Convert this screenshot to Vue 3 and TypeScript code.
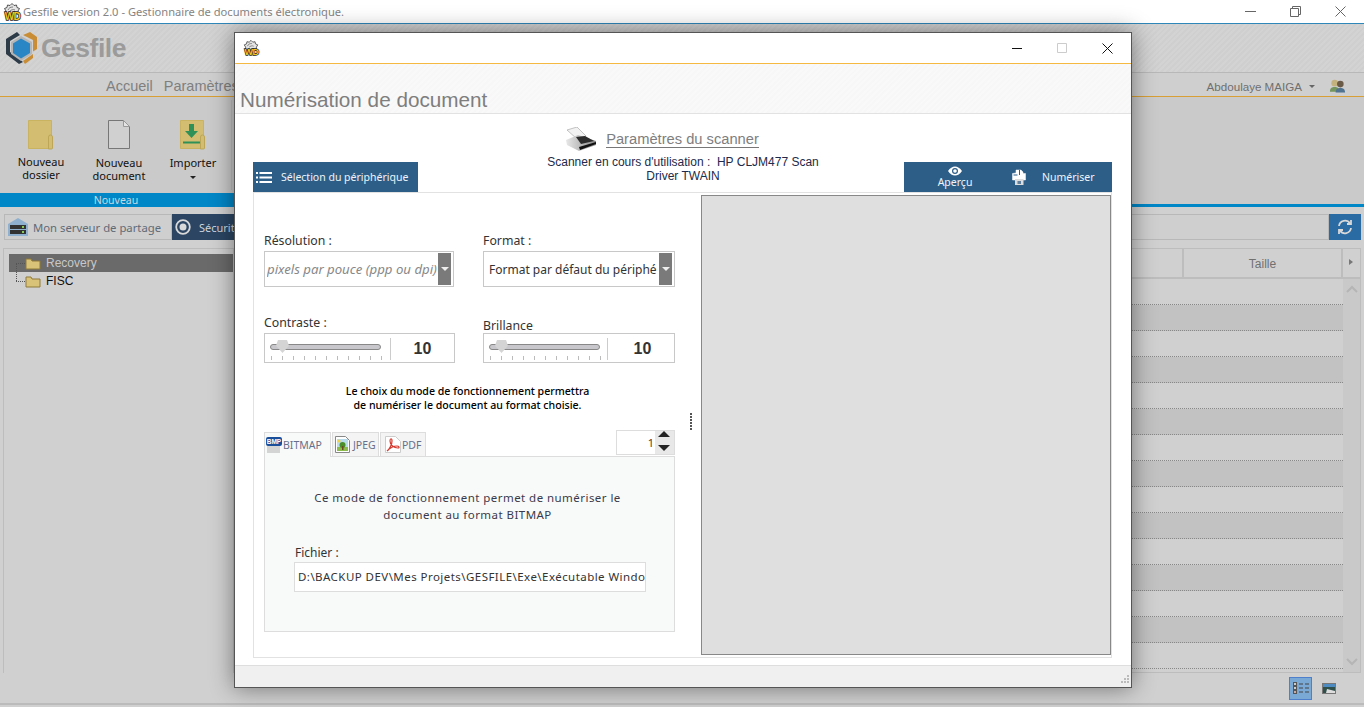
<script setup lang="ts">
const rows = Array.from({ length: 15 }, (_, i) => i)
const ticks = Array.from({ length: 11 }, (_, i) => i)
</script>

<template>
  <div class="app">
    <header class="titlebar">
      <svg class="wd" width="20" height="20" viewBox="0 0 20 20">
        <path d="M4 9 L2.500 6.500 L5 5.500 L5.500 3 L8 3.500 L10 1.500 L12 3.500 L14.500 3 L15 5.500 L17.500 6.500 L16 9 L16 12 H4 Z" fill="#e4e4e4" stroke="#444" stroke-width=".9" />
        <path d="M6 8c1-2 2-3 5-3M8 9c1-1 3-2 5-1" fill="none" stroke="#666" stroke-width=".8" />
        <text x="10.500" y="17.800" class="wdt" text-anchor="middle">WD</text>
      </svg>
      <span class="apptitle">Gesfile version 2.0 - Gestionnaire de documents électronique.</span>
      <div class="winbtns">
        <svg width="11" height="11" viewBox="0 0 11 11"><path d="M0 5.500h11" stroke="#666" /></svg>
        <svg width="11" height="11" viewBox="0 0 11 11"><path d="M.5 2.500h8v8h-8zM2.500 2.500v-2h8v8h-2" stroke="#666" fill="none" /></svg>
        <svg width="11" height="11" viewBox="0 0 11 11"><path d="M.5.500l10 10M10.500.500l-10 10" stroke="#666" /></svg>
      </div>
    </header>

    <div class="logoband">
      <svg width="32" height="33" viewBox="0 0 32 33">
        <path d="M11 0 L0 7 V22 L13 32 L17 30 L6 21.500 L4 20 V9 L14 3 Z" fill="#2d3a48" />
        <path d="M15 4 L26 10 V22 L15 29 L5 22 V10 Z" fill="#b5b5b5" />
        <path d="M15 6.500 L24 11.500 V21 L15 26.500 L7 21 V11.500 Z" fill="#2a86c4" />
        <path d="M17 3 L24 0 L31 5 V17 L27 19.500 V8 Z" fill="#c98d35" />
        <path d="M17 29 L27 22 V26 L19 32 Z" fill="#c98d35" />
      </svg>
      <span class="logotext">Gesfile</span>
    </div>

    <nav class="menubar">
      <span class="menu-item first">Accueil</span>
      <span class="menu-item">Paramètres</span>
      <span class="spacer"></span>
      <span class="user">Abdoulaye MAIGA</span>
      <span class="caret"></span>
      <svg width="17" height="16" viewBox="0 0 18 16">
        <circle cx="6" cy="5" r="3.500" fill="#c4b27e" />
        <path d="M1 14c0-4 2-5 5-5s5 1 5 5z" fill="#74955c" />
        <circle cx="12" cy="6" r="3.500" fill="#6a5a48" />
        <path d="M7 15c0-4 2-5 5-5s5 1 5 5z" fill="#4f7391" />
      </svg>
    </nav>

    <section class="ribbon">
      <div class="rb rb1">
        <svg width="26" height="30" viewBox="0 0 26 30">
          <path d="M.5.500h23v28H.5z" fill="#d2bd70" stroke="#c9b260" />
          <path d="M20.500 29v-12q0-2 2-2t2 2v11q0 1-1 1z" fill="#d2bd70" stroke="#bda756" />
        </svg>
        <span>Nouveau<br />dossier</span>
      </div>
      <div class="rb rb2">
        <svg width="22" height="29" viewBox="0 0 22 29">
          <path d="M.5.500h15l6 6v22H.5z" fill="#d0d0d0" stroke="#777" />
          <path d="M15.500.500v6h6z" fill="#e4e4e4" stroke="#999" />
        </svg>
        <span>Nouveau<br />document</span>
      </div>
      <div class="rb rb3">
        <svg width="26" height="30" viewBox="0 0 26 30">
          <path d="M.5.500h23v28H.5z" fill="#d2bd70" stroke="#c9b260" />
          <path d="M20.500 29v-12q0-2 2-2t2 2v11q0 1-1 1z" fill="#d2bd70" stroke="#bda756" />
          <path d="M9 4h5v7h4l-6.500 7L5 11h4z" fill="#2f9158" />
          <path d="M3 22.500h17" stroke="#2f9158" stroke-width="2" />
        </svg>
        <span>Importer</span>
        <i class="mini-caret"></i>
      </div>
      <div class="rb-sep"></div>
    </section>
    <div class="band"><span>Nouveau</span><i></i></div>

    <div class="tabsrow">
      <div class="srv">
        <svg width="20" height="18" viewBox="0 0 20 18">
          <path d="M0 6L10 0l10 6v12H0z" fill="#8fb1cf" />
          <rect x="2" y="7" width="16" height="4" fill="#333" />
          <rect x="2" y="12" width="16" height="4" fill="#333" />
          <rect x="14" y="8" width="2" height="2" fill="#8c5" />
          <rect x="14" y="13" width="2" height="2" fill="#8c5" />
        </svg>
        <span>Mon serveur de partage</span>
      </div>
      <div class="secu">
        <svg width="16" height="16" viewBox="0 0 16 16">
          <circle cx="8" cy="8" r="6.800" fill="none" stroke="#d9d9d9" stroke-width="1.800" />
          <circle cx="8" cy="8" r="3.500" fill="#d9d9d9" />
        </svg>
        <span>Sécurité</span>
      </div>
      <div class="searchbox"></div>
      <div class="refresh">
        <svg width="16" height="16" viewBox="0 0 16 16" fill="none" stroke="#d8d8d8" stroke-width="1.800">
          <path d="M2 7a6 6 0 0 1 11-2.500M14 9a6 6 0 0 1-11 2.500" />
          <path d="M14 1v4h-4M2 15v-4h4" />
        </svg>
      </div>
    </div>

    <div class="main">
      <aside class="tree">
        <div class="node selected">
          <svg class="fold" width="16" height="13" viewBox="0 0 16 13"><path d="M1 2h5l1 2h8v8H1z" fill="#d9c378" stroke="#8f7b3b" /></svg>
          <span>Recovery</span>
        </div>
        <div class="node second">
          <svg class="fold" width="16" height="13" viewBox="0 0 16 13"><path d="M1 2h5l1 2h8v8H1z" fill="#d9c378" stroke="#8f7b3b" /></svg>
          <span>FISC</span>
        </div>
      </aside>
      <section class="table">
        <div class="thead">
          <div class="th-blank"></div>
          <div class="th">Taille</div>
          <div class="th-arrow"></div>
        </div>
        <div class="tbody">
          <div class="rowsbox">
            <div v-for="r in rows" :key="r" class="trow" :class="{ alt: r % 2 === 1 }"></div>
          </div>
          <div class="scroll">
            <svg width="12" height="8" viewBox="0 0 12 8"><path d="M1 7l5-5 5 5" fill="none" stroke="#b5b5b5" stroke-width="2" /></svg>
            <svg width="12" height="8" viewBox="0 0 12 8"><path d="M1 1l5 5 5-5" fill="none" stroke="#b5b5b5" stroke-width="2" /></svg>
          </div>
        </div>
      </section>
    </div>

    <footer class="statusbar">
      <div class="view">
        <svg width="16" height="13" viewBox="0 0 16 13">
          <rect x=".5" y=".5" width="3" height="3" fill="#ccc" stroke="#555" />
          <rect x=".5" y="4.500" width="3" height="3" fill="#ccc" stroke="#555" />
          <rect x=".5" y="8.500" width="3" height="3" fill="#c9a9a0" stroke="#555" />
          <path d="M6 2h4M12 2h4M6 6h4M12 6h4M6 10h4M12 10h4" stroke="#444" />
        </svg>
      </div>
      <div class="pic">
        <svg width="12" height="9" viewBox="0 0 12 9">
          <rect width="12" height="4" fill="#4d8bc0" />
          <path d="M0 3h12v6H0z" fill="#2f4f4a" />
          <path d="M4 5l8 2v2H3z" fill="#ddd" />
        </svg>
      </div>
    </footer>

    <div class="dialog">
      <div class="dlg-title">
        <svg class="wd" width="18" height="18" viewBox="0 0 20 20">
          <path d="M4 9 L2.500 6.500 L5 5.500 L5.500 3 L8 3.500 L10 1.500 L12 3.500 L14.500 3 L15 5.500 L17.500 6.500 L16 9 L16 12 H4 Z" fill="#e4e4e4" stroke="#444" stroke-width=".9" />
          <path d="M6 8c1-2 2-3 5-3M8 9c1-1 3-2 5-1" fill="none" stroke="#666" stroke-width=".8" />
          <text x="10.500" y="17.800" class="wdt" text-anchor="middle">WD</text>
        </svg>
        <div class="dlg-btns">
          <svg width="11" height="11" viewBox="0 0 11 11"><path d="M0 5.500h10" stroke="#111" /></svg>
          <svg width="11" height="11" viewBox="0 0 11 11"><path d="M.5.500h9v9h-9z" stroke="#ccc" fill="none" /></svg>
          <svg width="11" height="11" viewBox="0 0 11 11"><path d="M.5.500l10 10M10.500.500l-10 10" stroke="#111" /></svg>
        </div>
      </div>
      <div class="dlg-head"><h1>Numérisation de document</h1></div>

      <div class="dlg-body">
        <div class="scan-title">
          <svg width="32" height="24" viewBox="0 0 32 24">
            <defs>
              <linearGradient id="pg" x1="0" y1="0" x2="1" y2="0">
                <stop offset="0" stop-color="#e8e8e8" />
                <stop offset="1" stop-color="#8a8a8a" />
              </linearGradient>
            </defs>
            <path d="M2 3L12 0l9 9-9 3z" fill="#f2f2f2" stroke="#aaa" stroke-width=".7" />
            <path d="M1 13l12-5 18 6v4L14 24 2 18z" fill="url(#pg)" />
            <path d="M11 10l9-1 9 5-13 3z" fill="#2c2c2c" />
            <path d="M14 20l17-5v2L15 23z" fill="#111" />
          </svg>
          <span>Paramètres du scanner</span>
        </div>

        <div class="tool">
          <div class="tbtn sel">
            <svg width="16" height="11" viewBox="0 0 16 11" fill="#fff">
              <rect y="0" width="2" height="2" /><rect y="4.500" width="2" height="2" /><rect y="9" width="2" height="2" />
              <rect x="3.500" y="0" width="12.500" height="2" /><rect x="3.500" y="4.500" width="12.500" height="2" /><rect x="3.500" y="9" width="12.500" height="2" />
            </svg>
            <span>Sélection du périphérique</span>
          </div>
          <div class="cur">Scanner en cours d'utilisation :&nbsp; HP CLJM477 Scan<br />Driver TWAIN</div>
          <div class="tbtn act">
            <div class="apercu">
              <svg width="14" height="10" viewBox="0 0 14 10">
                <path d="M0 5c2-3 4.500-4.500 7-4.500S12 2 14 5c-2 3-4.500 4.500-7 4.500S2 8 0 5z" fill="#fff" />
                <circle cx="7" cy="5" r="3" fill="#2d5e88" />
                <circle cx="7" cy="5" r="1.800" fill="#fff" />
              </svg>
              <span>Aperçu</span>
            </div>
            <svg class="scanico" width="14" height="16" viewBox="0 0 14 16">
              <path d="M.5 11V4.500L4 4V1h5l2 2v1.500h2.500V11z" fill="#fff" stroke="#fff" stroke-width=".5" />
              <path d="M7.500 1v5M1.500 6h4" stroke="#2d5e88" stroke-width="1" />
              <rect x="3" y="10" width="8.500" height="6" fill="#dcdcdc" />
              <rect x="5.500" y="12" width="3.500" height="3" fill="#5f7f9c" />
            </svg>
            <span class="num">Numériser</span>
          </div>
        </div>

        <div class="panel">
          <div class="form">
            <div class="grid">
              <div class="fld">
                <label>Résolution :</label>
                <div class="select s1">
                  <span class="ph">pixels par pouce (ppp ou dpi)</span>
                  <i class="drop"></i>
                </div>
              </div>
              <div class="fld">
                <label>Format :</label>
                <div class="select">
                  <span class="val">Format par défaut du périphé</span>
                  <i class="drop"></i>
                </div>
              </div>
              <div class="fld f2">
                <label>Contraste :</label>
                <div class="slider wide">
                  <div class="track-wrap">
                    <div class="track"></div>
                    <div class="thumb"></div>
                    <div class="ticks"><i v-for="t in ticks" :key="t"></i></div>
                  </div>
                  <b>10</b>
                </div>
              </div>
              <div class="fld f2 f3">
                <label>Brillance</label>
                <div class="slider">
                  <div class="track-wrap">
                    <div class="track"></div>
                    <div class="thumb"></div>
                    <div class="ticks"><i v-for="t in ticks" :key="t"></i></div>
                  </div>
                  <b>10</b>
                </div>
              </div>
            </div>

            <p class="note">Le choix du mode de fonctionnement permettra<br />de numériser le document au format choisie.</p>

            <div class="tabs-head">
              <div class="tab active">
                <svg width="16" height="17" viewBox="0 0 16 17">
                  <rect x="1" y="9" width="13" height="7" fill="#d4d4d4" />
                  <rect y="0" width="16" height="9" rx="2" fill="#1b4f9c" />
                  <text x="8" y="7.300" class="bmp" text-anchor="middle">BMP</text>
                </svg>
                <span>BITMAP</span>
              </div>
              <div class="tab t2">
                <svg width="15" height="17" viewBox="0 0 15 17">
                  <path d="M.5.500h10l4 4v12H.5z" fill="#fff" stroke="#888" />
                  <rect x="2" y="3" width="11" height="12" fill="#b9dcec" />
                  <path d="M2 11h11v4H2z" fill="#8dbb4b" />
                  <circle cx="7.500" cy="9" r="3" fill="#4c8f2a" />
                  <rect x="7" y="10" width="1.500" height="4" fill="#6a4a22" />
                  <circle cx="4" cy="5" r="1.500" fill="#f4d445" />
                </svg>
                <span>JPEG</span>
              </div>
              <div class="tab t3">
                <svg width="16" height="17" viewBox="0 0 16 17">
                  <path d="M.5.500h10l5 5v11H.5z" fill="#fff" stroke="#ccc" />
                  <path d="M2 15c3-2 5-7 5-10 0-3-2-3-2 0 0 4 4 7 8 7 2 0 1-2-1-2-4 0-7 2-10 5z" fill="none" stroke="#d63a2f" stroke-width="1.200" />
                </svg>
                <span>PDF</span>
              </div>
              <span class="spacer"></span>
              <div class="spin">
                <span class="spin-val">1</span>
                <div class="spin-btns">
                  <i class="up"></i>
                  <i class="dn"></i>
                </div>
              </div>
            </div>
            <div class="tab-body">
              <p class="mode">Ce mode de fonctionnement permet de numériser le<br />document au format BITMAP</p>
              <label class="fic">Fichier :</label>
              <div class="path">D:\BACKUP DEV\Mes Projets\GESFILE\Exe\Exécutable Windo</div>
            </div>
          </div>
          <div class="sep"><i></i><i></i><i></i><i></i><i></i><i></i></div>
          <div class="preview"></div>
        </div>
      </div>

      <div class="dlg-status">
        <svg width="10" height="10" viewBox="0 0 10 10" fill="#bbb">
          <rect x="8" y="0" width="2" height="2" /><rect x="5" y="3" width="2" height="2" /><rect x="8" y="3" width="2" height="2" />
          <rect x="2" y="6" width="2" height="2" /><rect x="5" y="6" width="2" height="2" /><rect x="8" y="6" width="2" height="2" />
        </svg>
      </div>
    </div>
  </div>
</template>

<style>
html, body { margin: 0; padding: 0; overflow: hidden; }
</style>

<style scoped>
.app {
  position: relative;
  width: 1364px;
  height: 707px;
  overflow: hidden;
  background: #d0d0d0;
  font-family: "Liberation Sans", Arial, sans-serif;
  color: #333;
}
.wdt { font: 700 10px "Liberation Sans", sans-serif; fill: #f6c81e; stroke: #222; stroke-width: 1.400px; paint-order: stroke; letter-spacing: -.5px; }
.titlebar {
  height: 23px;
  display: flex;
  align-items: center;
  background: #fff;
  border-bottom: 1px solid #2f86b8;
  padding-left: 2px;
  box-sizing: content-box;
}
.apptitle { margin-left: 1px; font: 11.150px "Noto Sans", sans-serif; color: #848484; }
.winbtns { margin-left: auto; display: flex; gap: 34px; margin-right: 18px; }
.logoband {
  height: 49px;
  display: flex;
  align-items: center;
  padding-left: 6px;
  background: repeating-linear-gradient(135deg, #d3d3d3 0 2px, #cfcfcf 2px 4px);
  border-bottom: 1px solid #b8b8b8;
  box-sizing: border-box;
}
.logotext { font: 700 26.500px "Liberation Sans", sans-serif; color: #9b9b9b; letter-spacing: -.5px; margin-left: 3px; }
.menubar {
  height: 24px;
  box-sizing: border-box;
  display: flex;
  align-items: center;
  background: #cfcfcf;
  border-bottom: 1px solid #d79f35;
  padding: 3px 18px 0 0;
}
.menu-item { font: 14.500px "Liberation Sans", sans-serif; color: #7f7f7f; margin-right: 11px; }
.menu-item.first { margin-left: 106px; }
.spacer { flex: 1; }
.user { font: 11.600px "Liberation Sans", sans-serif; color: #6f6f6f; }
.caret { width: 0; height: 0; border: 3px solid transparent; border-top: 3px solid #666; margin: 3px 14px 0 7px; }
.ribbon { height: 96px; background: #c9cac9; display: flex; box-sizing: border-box; font: 11px "Noto Sans", sans-serif; color: #111; }
.rb { display: flex; flex-direction: column; align-items: center; text-align: center; line-height: 13px; padding-top: 23px; }
.rb span { display: block; }
.rb1 { width: 60px; margin-left: 11px; }
.rb1 span { margin-top: 5px; }
.rb2 { width: 70px; margin-left: 13px; }
.rb2 span { margin-top: 7px; }
.rb3 { width: 60px; margin-left: 9px; }
.rb3 span { margin-top: 6px; }
.rb-sep { width: 1px; height: 90px; margin: 3px 0 0 8px; background: #bdbdbd; }
.mini-caret { width: 0; height: 0; border: 3px solid transparent; border-top: 3px solid #222; margin-top: 7px; }
.band { height: 14px; background: #c9cac9; color: #c7d9e3; font: 10.500px/14px "Noto Sans", sans-serif; display: flex; }
.band span { display: block; width: 236px; box-sizing: border-box; padding-right: 4px; text-align: center; background: #0087c7; }
.band i { flex: 1; height: 3px; align-self: flex-end; background: #0087c7; }
.tabsrow { display: flex; height: 26px; margin: 7px 3px 0 4px; align-items: stretch; background: #cfcfcf; }
.srv { width: 168px; box-sizing: border-box; border: 1px solid #b8b8b8; display: flex; align-items: center; gap: 5px; padding-left: 3px; font: 11.300px "Noto Sans", sans-serif; color: #5f6b78; }
.secu { width: 200px; background: #2b4563; display: flex; align-items: center; gap: 8px; padding-left: 3px; font: 11px "Noto Sans", sans-serif; color: #cfd5dc; }
.searchbox { flex: 1; border: 1px solid #b8b8b8; border-left: 0; }
.refresh { width: 32px; background: #2a6ba3; display: flex; align-items: center; justify-content: center; }
.main { display: flex; height: 425px; margin: 8px 3px 0 3px; }
.tree { width: 230px; padding-top: 5px; box-sizing: border-box; border: 1px solid #bdbdbd; border-right: 0; border-bottom: 0; }
.node { height: 18px; margin-left: 5px; display: flex; align-items: center; font: 12px "Liberation Sans", sans-serif; color: #111; padding-left: 16px; position: relative; }
.node::before { content: ""; position: absolute; left: 7px; top: 9px; width: 9px; border-top: 1px dotted #555; }
.second::after { content: ""; position: absolute; left: 7px; top: -9px; height: 18px; border-left: 1px dotted #555; }
.node .fold { margin-right: 5px; }
.node.selected { background: #6a6a6a; color: #c8c8c8; }
.table { flex: 1; display: flex; flex-direction: column; border: 1px solid #bdbdbd; }
.thead { height: 30px; box-sizing: border-box; display: flex; border-bottom: 2px solid #bdbdbd; }
.th-blank { flex: 1; border-right: 2px solid #bdbdbd; }
.th { width: 159px; padding-top: 1px; box-sizing: border-box; display: flex; align-items: center; justify-content: center; border-right: 2px solid #bdbdbd; font: 12px "Liberation Sans", sans-serif; color: #707070; }
.th-arrow { width: 17px; position: relative; }
.th-arrow::after { content: ""; position: absolute; left: 6px; top: 10px; border: 3px solid transparent; border-left: 4px solid #777; border-right: 0; }
.tbody { flex: 1; display: flex; overflow: hidden; }
.rowsbox { flex: 1; }
.trow { height: 26px; box-sizing: border-box; border-bottom: 1px dotted #888; }
.trow.alt { background: #c2c2c2; }
.scroll { width: 17px; background: #c9c9c9; display: flex; flex-direction: column; justify-content: space-between; align-items: center; padding: 6px 0; }
.statusbar { height: 32px; display: flex; align-items: center; justify-content: flex-end; padding-right: 28px; gap: 10px; box-sizing: border-box; border-bottom: 2px solid #bbb; }
.view { width: 23px; height: 23px; background: #7ba9d6; border: 1px solid #4d7fcc; display: flex; align-items: center; justify-content: center; box-sizing: border-box; }
.pic { width: 14px; height: 11px; box-sizing: border-box; border: 1px solid #777; display: flex; overflow: hidden; }

.dialog {
  position: absolute;
  left: 234px;
  top: 32px;
  width: 898px;
  height: 656px;
  box-sizing: border-box;
  border: 1px solid #555;
  background: #fff;
  display: flex;
  flex-direction: column;
  box-shadow: 0 0 22px rgba(0, 0, 0, .45);
}
.dlg-title { height: 30px; display: flex; align-items: center; padding-left: 7px; border-bottom: 1px solid #f5b942; }
.dlg-btns { margin-left: auto; display: flex; align-items: center; gap: 34px; margin-right: 18px; }
.dlg-head { height: 50px; box-sizing: border-box; background: repeating-linear-gradient(135deg, #f9f9f9 0 2px, #f7f7f7 2px 4px); border-bottom: 1px solid #e2e2e2; position: relative; }
.dlg-head h1 { margin: 0; position: absolute; left: 5px; bottom: 1px; font: 400 20.700px "Liberation Sans", sans-serif; color: #7e7e7e; }
.dlg-body { flex: 1; display: flex; flex-direction: column; padding: 0 18px; }
.scan-title { height: 48px; box-sizing: border-box; padding: 2px 42px 0 0; display: flex; align-items: center; justify-content: center; gap: 9px; font: 14.700px "Liberation Sans", sans-serif; color: #7e7e7e; }
.scan-title span { border-bottom: 1px solid #777; }
.tool { display: flex; height: 30px; width: 859px; align-items: stretch; }
.tbtn { background: #2d5e88; color: #f0f4f8; font: 10.500px "Noto Sans", sans-serif; display: flex; align-items: center; }
.sel { width: 165px; padding-left: 3px; gap: 9px; box-sizing: border-box; }
.cur { flex: 1; align-self: flex-start; margin-top: -7px; padding-left: 44px; text-align: center; font: 12px/14px "Liberation Sans", sans-serif; color: #222a4a; white-space: nowrap; }
.act { width: 208px; }
.apercu { width: 102px; display: flex; flex-direction: column; align-items: center; margin-top: -1px; }
.apercu span { line-height: 12px; }
.scanico { margin-left: 6px; }
.num { margin-left: 16px; }
.panel { height: 466px; box-sizing: border-box; width: 859px; border: 1px solid #e2e2e2; display: flex; }
.form { width: 424px; padding: 0 0 0 10px; flex: none; box-sizing: content-box; }
.grid { display: grid; grid-template-columns: 191px 192px; column-gap: 28px; margin-top: 40px; }
.fld label { display: block; font: 12.300px/16px "Noto Sans", sans-serif; color: #333; height: 18px; }
.select { height: 36px; box-sizing: border-box; border: 1px solid #c8c8c8; display: flex; align-items: center; justify-content: space-between; padding: 2px; font: 12px "Noto Sans", sans-serif; }
.s1 { width: 190px; }
.select span { white-space: nowrap; overflow: hidden; }
.ph { font-size: 13.200px; font-style: italic; color: #888; }
.val { padding-left: 3px; color: #333; }
.drop { width: 13px; height: 32px; flex: none; background: #7a7a7a; position: relative; }
.drop::after { content: ""; position: absolute; left: 3px; top: 14px; border: 4px solid transparent; border-top: 4px solid #eee; }
.f2 { margin-top: 28px; }
.f3 { padding-top: 3px; }
.f3 label { height: 15px; }
.slider { height: 30px; box-sizing: border-box; border: 1px solid #c8c8c8; display: flex; }
.track-wrap { width: 123px; border-right: 1px solid #ccc; margin: 4px 0 2px; position: relative; flex: none; }
.wide .track-wrap { width: 125px; }
.track { position: absolute; left: 5px; width: 109px; top: 6px; height: 4px; background: #c8c8cc; border: 1px solid #888; border-radius: 3px; }
.thumb { position: absolute; left: 11px; top: 2px; width: 13px; height: 13px; background: #d4d4d4; clip-path: polygon(15% 0, 85% 0, 100% 45%, 50% 100%, 0 45%); }
.ticks { position: absolute; left: 6px; width: 111px; bottom: 0; height: 4px; display: flex; justify-content: space-between; }
.ticks i { width: 1px; background: #bbb; }
.slider b { flex: 1; text-align: center; padding-left: 3px; font: 700 16px/30px "Liberation Sans", sans-serif; color: #333; }
.wide b { padding-left: 0; }
.note { margin: 21px 0 0; width: 407px; text-align: center; font: 500 10.600px/14px "Noto Sans", sans-serif; color: #000; }
.tabs-head { display: flex; align-items: flex-end; margin-top: 18px; width: 411px; height: 26px; }
.tab { height: 24px; width: 47px; margin-right: 1px; box-sizing: border-box; border: 1px solid #ddd; border-bottom: 0; display: flex; align-items: center; gap: 3px; padding: 0 2px; font: 10.500px "Noto Sans", sans-serif; color: #67708a; background: #f4f4f4; }
.tab.active { width: 67px; gap: 1px; padding-left: 1px; background: #f8fafa; height: 25px; margin-bottom: -1px; position: relative; z-index: 1; }
.t2 { width: 47px; }
.t3 { width: 46px; padding-left: 4px; gap: 1px; }
.spin { width: 59px; height: 25px; display: flex; border: 1px solid #ddd; box-sizing: border-box; margin-bottom: 1px; }
.spin-val { flex: 1; text-align: right; padding-right: 1px; font: 11px/23px "Noto Sans", sans-serif; color: #663322; }
.spin-btns { width: 19px; display: flex; flex-direction: column; background: #e8e8e8; }
.spin-btns i { flex: 1; position: relative; }
.up::after { content: ""; position: absolute; left: 3px; top: 0; border: 6px solid transparent; border-bottom: 6px solid #222; border-top: 0; }
.dn::after { content: ""; position: absolute; left: 3px; top: 2px; border: 6px solid transparent; border-top: 6px solid #222; border-bottom: 0; }
.tab-body { width: 411px; height: 176px; box-sizing: border-box; border: 1px solid #ddd; background: #f8fafa; padding-top: 32px; font: 11.500px "Noto Sans", sans-serif; letter-spacing: .45px; }
.mode { margin: 0 4px 0 0; text-align: center; line-height: 17px; color: #3a3a4a; }
.fic { display: block; margin: 23px 0 0 30px; line-height: 14px; font-size: 12px; letter-spacing: 0; color: #333; }
.path { margin: 2px 0 0 29px; width: 352px; height: 30px; box-sizing: border-box; border: 1px solid #ddd; background: #fff; padding-left: 3px; font: 11.500px/28px "Noto Sans", sans-serif; color: #333; white-space: nowrap; overflow: hidden; }
.sep { width: 6px; margin: 220px 0 0 0; flex: none; display: flex; flex-direction: column; align-items: center; gap: 1px; }
.sep i { width: 2px; height: 2px; background: #555; }
.preview { margin: 2px 0 0 7px; width: 410px; height: 460px; box-sizing: border-box; border: 1px solid #888; background: #dfdfdf; }
.dlg-status { height: 22px; margin-top: auto; background: #f0f0f0; border-top: 1px solid #dedede; display: flex; align-items: flex-end; justify-content: flex-end; padding: 0 2px 2px 0; box-sizing: border-box; }
.bmp { font: 700 6.500px "Liberation Sans", sans-serif; fill: #fff; }
</style>
